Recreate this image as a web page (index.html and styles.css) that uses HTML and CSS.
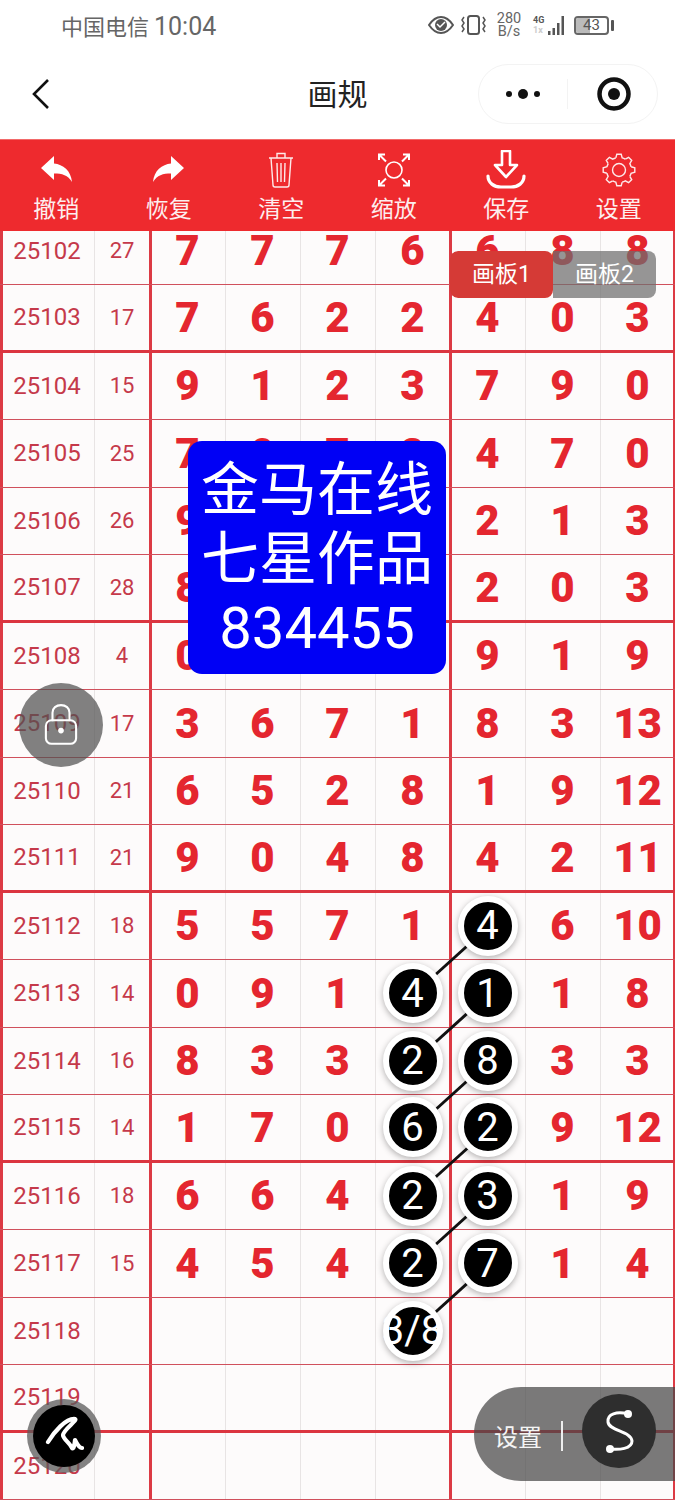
FILE: index.html
```html
<!DOCTYPE html>
<html>
<head>
<meta charset="UTF-8">
<title>画规</title>
<link rel="stylesheet" href="styles.css">
</head>
<body>
<div class="page">
  <div class="status">
    <div class="carrier"><span class="carrier-cn">中国电信</span><span class="carrier-time">10:04</span></div>
    <div class="status-icons">
      <svg class="eye" viewBox="0 0 26 18"><path d="M1 9C5 3 9 1 13 1s8 2 12 8c-4 6-8 8-12 8S5 15 1 9z" fill="none" stroke="#555" stroke-width="2"/><circle cx="13" cy="9" r="6" fill="#555"/><path d="M9 8l3 3 5-5" fill="none" stroke="#fff" stroke-width="1.5"/></svg>
      <svg class="vibrate" viewBox="0 0 25 20"><rect x="7" y="1" width="11" height="18" rx="2.5" fill="none" stroke="#555" stroke-width="2"/><path d="M3 2l-2 3 2 3-2 3 2 3-2 3M22 2l2 3-2 3 2 3-2 3 2 3" fill="none" stroke="#555" stroke-width="1.5"/></svg>
      <div class="speed">280<br>B/s</div>
      <div class="net">
        <div class="net-labels"><span>4G</span><span class="net-faint">1x</span></div>
        <svg class="bars" viewBox="0 0 20 19"><path d="M2 15v4h2.500v-4zM6.500 12v7H9v-7zM11 7v12h2.500V7zM15.500 0v19H18V0z" fill="#555"/></svg>
      </div>
      <div class="battery"><div class="battery-fill"></div><span class="battery-num">43</span></div>
      <div class="battery-nub"></div>
    </div>
  </div>

  <div class="nav">
    <svg class="back" viewBox="0 0 18 32"><path d="M16 2L2 16l14 14" fill="none" stroke="#111" stroke-width="2.600"/></svg>
    <div class="title">画规</div>
    <div class="capsule">
      <div class="dots"><i></i><b></b><i></i></div>
      <div class="capsule-line"></div>
      <svg class="target" viewBox="0 0 34 34"><circle cx="17" cy="17" r="14.500" fill="none" stroke="#111" stroke-width="4.500"/><circle cx="17" cy="17" r="6" fill="#111"/></svg>
    </div>
  </div>

  <div class="toolbar">
    <div class="tool">
      <svg class="tool-icon" viewBox="0 0 40 40"><path d="M5 18L18 6v7.500c9 1 17 7 18 18.500-4-7-10-8.500-18-8.500V30z" fill="#fff"/></svg>
      <span>撤销</span>
    </div>
    <div class="tool">
      <svg class="tool-icon" viewBox="0 0 40 40"><path d="M35 18L22 6v7.500C13 14.500 5 20.500 4 32c4-7 10-8.500 18-8.500V30z" fill="#fff"/></svg>
      <span>恢复</span>
    </div>
    <div class="tool">
      <svg class="tool-icon" viewBox="0 0 40 40"><path d="M8 8h24M16 8V3.500h8V8M10 8l2 27c0 1 1 2 2 2h12c1 0 2-1 2-2l2-27M16 13l.5 19M20 13v19M24 13l-.5 19" fill="none" stroke="#fff" stroke-width="1.400" opacity=".9"/></svg>
      <span>清空</span>
    </div>
    <div class="tool">
      <svg class="tool-icon" viewBox="0 0 40 40"><circle cx="20" cy="20" r="8" fill="none" stroke="#fff" stroke-width="1.600"/><path d="M5 10V4.500h6M5 4.500l7 7M29 4.500h6V10M35 4.500l-7 7M5 30v5.500h6M5 35.500l7-7M35 30v5.500h-6M35 35.500l-7-7" fill="none" stroke="#fff" stroke-width="2"/></svg>
      <span>缩放</span>
    </div>
    <div class="tool">
      <svg class="tool-icon tool-save" viewBox="0 0 40 40"><path d="M16 1h8v14h7L20 27 9 15h7z" fill="none" stroke="#fff" stroke-width="2.600" stroke-linejoin="round"/><path d="M2 26c0 7 6 11 13 11h10c7 0 13-4 13-11" fill="none" stroke="#fff" stroke-width="3.200" stroke-linecap="round"/></svg>
      <span>保存</span>
    </div>
    <div class="tool">
      <svg class="tool-icon" viewBox="0 0 40 40">
        <g fill="none" stroke="#fff" stroke-width="1.400" opacity=".9">
          <circle cx="20" cy="20" r="6.500"/>
          <path id="tooth" d="M32.100 16.800L35.800 17.800V22.200L32.100 23.200A12.500 12.500 0 0 1 30.800 26.200"/>
          <use href="#tooth" transform="rotate(45 20 20)"/>
          <use href="#tooth" transform="rotate(90 20 20)"/>
          <use href="#tooth" transform="rotate(135 20 20)"/>
          <use href="#tooth" transform="rotate(180 20 20)"/>
          <use href="#tooth" transform="rotate(225 20 20)"/>
          <use href="#tooth" transform="rotate(270 20 20)"/>
          <use href="#tooth" transform="rotate(315 20 20)"/>
        </g>
      </svg>
      <span>设置</span>
    </div>
  </div>

  <div class="board">
    <div class="rows">
      <div class="row"><div>25102</div><div>27</div><div>7</div><div>7</div><div>7</div><div>6</div><div>6</div><div>8</div><div>8</div></div>
      <div class="row sep"><div>25103</div><div>17</div><div>7</div><div>6</div><div>2</div><div>2</div><div>4</div><div>0</div><div>3</div></div>
      <div class="row"><div>25104</div><div>15</div><div>9</div><div>1</div><div>2</div><div>3</div><div>7</div><div>9</div><div>0</div></div>
      <div class="row"><div>25105</div><div>25</div><div>7</div><div>0</div><div>7</div><div>2</div><div>4</div><div>7</div><div>0</div></div>
      <div class="row"><div>25106</div><div>26</div><div>9</div><div>1</div><div>5</div><div>3</div><div>2</div><div>1</div><div>3</div></div>
      <div class="row sep"><div>25107</div><div>28</div><div>8</div><div>6</div><div>4</div><div>0</div><div>2</div><div>0</div><div>3</div></div>
      <div class="row"><div>25108</div><div>4</div><div>0</div><div>2</div><div>1</div><div>5</div><div>9</div><div>1</div><div>9</div></div>
      <div class="row"><div>25109</div><div>17</div><div>3</div><div>6</div><div>7</div><div>1</div><div>8</div><div>3</div><div>13</div></div>
      <div class="row"><div>25110</div><div>21</div><div>6</div><div>5</div><div>2</div><div>8</div><div>1</div><div>9</div><div>12</div></div>
      <div class="row sep"><div>25111</div><div>21</div><div>9</div><div>0</div><div>4</div><div>8</div><div>4</div><div>2</div><div>11</div></div>
      <div class="row"><div>25112</div><div>18</div><div>5</div><div>5</div><div>7</div><div>1</div><div><span class="mark">4</span></div><div>6</div><div>10</div></div>
      <div class="row"><div>25113</div><div>14</div><div>0</div><div>9</div><div>1</div><div><span class="mark">4</span></div><div><span class="mark">1</span></div><div>1</div><div>8</div></div>
      <div class="row"><div>25114</div><div>16</div><div>8</div><div>3</div><div>3</div><div><span class="mark">2</span></div><div><span class="mark">8</span></div><div>3</div><div>3</div></div>
      <div class="row sep"><div>25115</div><div>14</div><div>1</div><div>7</div><div>0</div><div><span class="mark">6</span></div><div><span class="mark">2</span></div><div>9</div><div>12</div></div>
      <div class="row"><div>25116</div><div>18</div><div>6</div><div>6</div><div>4</div><div><span class="mark">2</span></div><div><span class="mark">3</span></div><div>1</div><div>9</div></div>
      <div class="row"><div>25117</div><div>15</div><div>4</div><div>5</div><div>4</div><div><span class="mark">2</span></div><div><span class="mark">7</span></div><div>1</div><div>4</div></div>
      <div class="row"><div>25118</div><div></div><div></div><div></div><div></div><div><span class="mark">3/8</span></div><div></div><div></div><div></div></div>
      <div class="row sep"><div>25119</div><div></div><div></div><div></div><div></div><div></div><div></div><div></div><div></div></div>
      <div class="row"><div>25120</div><div></div><div></div><div></div><div></div><div></div><div></div><div></div><div></div></div>
    </div>
    <svg class="links" viewBox="0 0 675 1269">
      <g stroke="#111" stroke-width="3">
        <path d="M487 695L412.500 762.500"/>
        <path d="M487 762.500L412.500 830"/>
        <path d="M487 830L412.500 897.500"/>
        <path d="M487 897.500L412.500 965"/>
        <path d="M487 965L412.500 1032.500"/>
        <path d="M487 1032.500L412.500 1100"/>
      </g>
    </svg>
  </div>

  <div class="tabs">
    <div class="tab tab-on">画板1</div>
    <div class="tab">画板2</div>
  </div>

  <div class="promo">金马在线<br>七星作品<br><span class="promo-num">834455</span></div>

  <div class="lock">
    <svg viewBox="0 0 36 46" width="34" height="44"><path d="M9 20V11c0-5 4-8 9-8s9 3 9 8v9" fill="none" stroke="#fff" stroke-width="2.200"/><rect x="2" y="19" width="32" height="25" rx="6" fill="none" stroke="#fff" stroke-width="2.200"/><circle cx="18" cy="30" r="3" fill="#fff"/></svg>
  </div>

  <div class="pen">
    <div class="pen-inner">
      <svg viewBox="0 0 40 40" width="40" height="40"><path d="M4 26C10 16 22 2 31 3c3 1-12 11-12 16 0 4 7 8 9 13 2 3 3-8 3-8 1 2 4 8 7 8" fill="none" stroke="#fff" stroke-width="4.200" stroke-linecap="round" stroke-linejoin="round"/></svg>
    </div>
  </div>

  <div class="settings">
    <span class="settings-text">设置</span>
    <div class="settings-line"></div>
    <div class="settings-btn">
      <svg viewBox="0 0 40 48" width="40" height="48"><path d="M29 7C18 4 8 7 9 15c1 9 23 9 24 19 0 8-13 9-22 8" fill="none" stroke="#fff" stroke-width="3" stroke-linecap="round"/><circle cx="29" cy="7" r="4" fill="#fff"/><circle cx="11" cy="42" r="4" fill="#fff"/></svg>
    </div>
  </div>
</div>
</body>
</html>
```

FILE: styles.css
```css
* {margin:0; padding:0; box-sizing:border-box;}
html, body {background:#fff;}
body {font-family:Roboto, "Noto Sans CJK SC", sans-serif;}

.page {position:relative; width:675px; height:1500px; overflow:hidden; display:flex; flex-direction:column;}

/* status bar */
.status {height:50px; display:flex; align-items:center; justify-content:space-between; padding:0 61px 0 61px; color:#666;}
.carrier {display:flex; align-items:baseline; margin-top:-1px;}
.carrier-cn {font-size:22px;}
.carrier-time {font-size:25px; margin-left:5px;}
.status-icons {display:flex; align-items:center;}
.eye {width:26px; height:18px; margin-right:7px;}
.vibrate {width:25px; height:20px; margin-right:9px;}
.speed {font-size:14.500px; line-height:13px; text-align:center; color:#666; width:28px; margin-right:10px;}
.net {display:flex; align-items:center; margin-right:8px;}
.net-labels {display:flex; flex-direction:column; font-size:9px; line-height:10px; font-weight:700; color:#555; width:13px;}
.net-faint {color:#ccc;}
.bars {width:20px; height:19px;}
.battery {position:relative; width:35px; height:19px; border:2px solid #666; border-radius:4px; display:flex; align-items:center; justify-content:center; overflow:hidden;}
.battery-fill {position:absolute; left:0; top:0; bottom:0; width:14px; background:#bbb;}
.battery-num {position:relative; font-size:15px; color:#555;}
.battery-nub {width:3px; height:11px; background:#555; margin-left:2px; border-radius:1px;}

/* title bar */
.nav {height:89px; display:grid; grid-template-columns:1fr auto 1fr; align-items:center; padding:0 17px;}
.back {width:18px; height:32px; margin:-1px 0 0 15px;}
.title {font-size:30px; color:#222; line-height:40px; margin-top:1px;}
.capsule {justify-self:end; width:180px; height:60px; margin-top:-2px; border:1px solid #f3f3f3; border-radius:30px; display:flex; align-items:center;}
.dots {width:88px; display:flex; align-items:center; justify-content:center; gap:6px;}
.dots i {width:6px; height:6px; border-radius:50%; background:#111;}
.dots b {width:10px; height:10px; border-radius:50%; background:#111;}
.capsule-line {width:1px; height:30px; background:#f3f3f3;}
.target {width:34px; height:34px; margin-left:29px;}

/* toolbar */
.toolbar {height:92px; background:#ee2a2e; border-top:1px solid #f26a6a; display:grid; grid-template-columns:repeat(6, 1fr); position:relative; z-index:3;}
.tool {display:flex; flex-direction:column; align-items:center; padding-top:10px; color:#fdeeee; font-size:23px;}
.tool-icon {width:40px; height:40px; display:block;}
.tool span {line-height:34px; margin-top:3px;}

/* grid */
.board {position:relative; flex:1; overflow:hidden; background:#fdfbfb;}
.rows {margin-top:-13.5px;}
.row {display:grid; grid-template-columns:94px 56px repeat(7, 75px); height:67.5px; border-bottom:1px solid #d0505c;}
.row.sep {border-bottom:3px solid #db3540;}
.row > div {display:flex; align-items:center; justify-content:center; font-size:42px; font-weight:900; color:#e4262f; box-shadow:inset 1px 0 0 #e8e4e4;}
.row > div:nth-child(1) {font-size:24px; font-weight:400; color:#c5394a; box-shadow:inset 3px 0 0 #dc3a44;}
.row > div:nth-child(2) {font-size:22px; font-weight:400; color:#c5394a; box-shadow:inset 1px 0 0 #e8e4e4, inset -1px 0 0 #dc3a44;}
.row > div:nth-child(3), .row > div:nth-child(7) {box-shadow:inset 2px 0 0 #dc3a44;}
.row > div:nth-child(6) {box-shadow:inset 1px 0 0 #e8e4e4, inset -1px 0 0 #dc3a44;}
.row > div:nth-child(9) {box-shadow:inset 1px 0 0 #e8e4e4, inset -2px 0 0 #dc3a44;}

.mark {position:relative; z-index:2; flex:none; width:60px; height:60px; border-radius:50%; background:#000; border:6px solid #fff; box-shadow:0 2px 6px rgba(0,0,0,.3); display:flex; align-items:center; justify-content:center; color:#fff; font-size:40px; font-weight:400; white-space:nowrap;}
.links {position:absolute; left:0; top:1.500px; width:675px; height:1269px; z-index:1;}

/* floating things */
.tabs {position:absolute; left:450px; top:251px; width:206px; height:47px; border-radius:8px; overflow:hidden; display:flex; z-index:2;}
.tab {flex:1; display:flex; align-items:center; justify-content:center; font-size:23px; padding-bottom:5px; color:#fff; background:rgba(110,110,110,.72);}
.tab-on {background:#d53a36; border-radius:8px;}

.promo {position:absolute; left:188px; top:441px; width:258px; height:233px; padding-top:15px; background:#0000f5; border-radius:14px; color:#fff; font-size:58px; line-height:69px; text-align:center; z-index:2;}
.promo-num {font-size:58px;}

.lock {position:absolute; left:19px; top:683px; width:84px; height:84px; border-radius:50%; background:rgba(80,80,80,.72); display:flex; align-items:center; justify-content:center; padding-bottom:2px; z-index:2;}

.pen {position:absolute; left:27px; top:1399px; width:74px; height:74px; border-radius:50%; background:rgba(90,90,90,.75); display:flex; align-items:center; justify-content:center; z-index:2;}
.pen-inner {width:62px; height:62px; border-radius:50%; background:#000; display:flex; align-items:center; justify-content:center;}

.settings {position:absolute; left:474px; top:1387px; width:201px; height:94px; border-radius:47px 0 0 47px; background:rgba(70,70,70,.72); display:flex; align-items:center; padding-left:20px; z-index:2;}
.settings-text {font-size:24px; color:#f4f4f4; margin-top:3px;}
.settings-line {width:2px; height:30px; background:#eee; margin:4px 0 0 19px;}
.settings-btn {width:74px; height:74px; border-radius:50%; background:#2e2e2e; margin:-6px 0 0 19px; display:flex; align-items:center; justify-content:center;}
```
